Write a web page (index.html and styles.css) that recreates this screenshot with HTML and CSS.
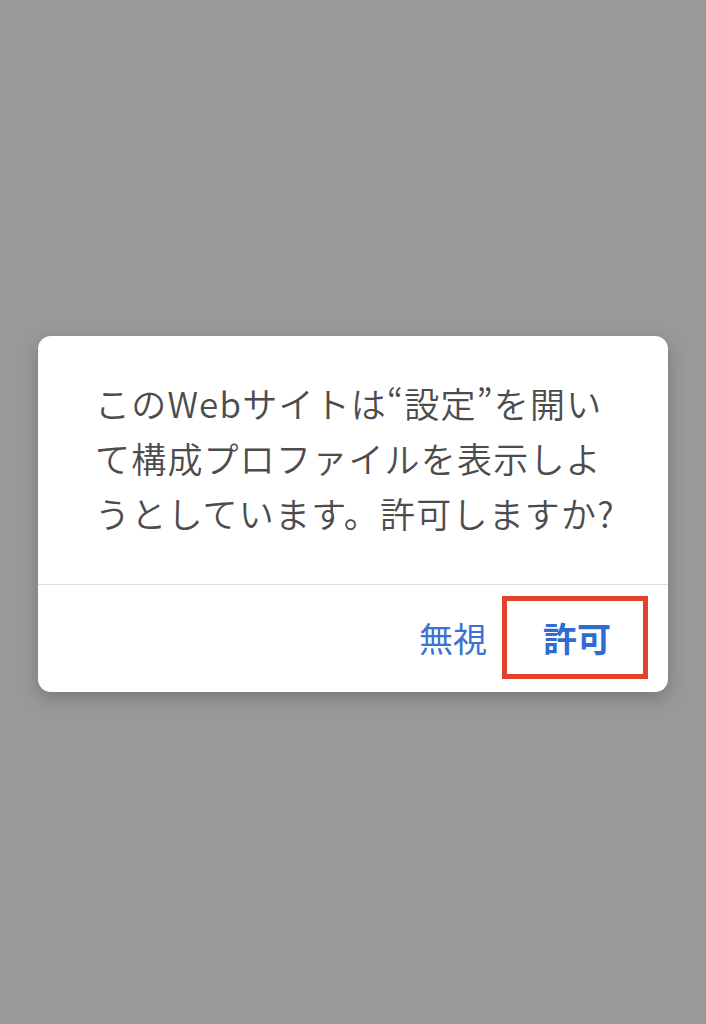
FILE: index.html
```html
<!DOCTYPE html>
<html lang="ja">
<head>
<meta charset="utf-8">
<link rel="stylesheet" href="styles.css">
</head>
<body>
<div class="screen">
  <div class="dialog">
    <div class="message">このWebサイトは“設定”を開い<br>て構成プロファイルを表示しよ<br>うとしています。許可しますか?</div>
    <div class="actions">
      <button class="btn ignore">無視</button>
      <button class="btn allow">許可</button>
    </div>
  </div>
</div>
</body>
</html>
```
FILE: styles.css
```css
html, body {
  margin: 0;
  padding: 0;
}
body {
  background: #999999;
  font-family: "Noto Sans CJK JP", "Noto Sans", sans-serif;
}
.screen {
  width: 706px;
  height: 1024px;
  display: flex;
  justify-content: center;
  padding-top: 336px;
  box-sizing: border-box;
}
.dialog {
  width: 630px;
  height: 356px;
  background: #ffffff;
  border-radius: 13px;
  box-shadow: 0 6px 18px rgba(0, 0, 0, 0.22);
  display: flex;
  flex-direction: column;
  overflow: hidden;
}
.message {
  height: 249px;
  box-sizing: border-box;
  padding: 39px 0 0 57px;
  font-size: 35px;
  font-weight: 350;
  line-height: 55px;
  color: #4c4c4c;
  letter-spacing: 1.2px;
  border-bottom: 1px solid #dcdcdc;
  white-space: nowrap;
}
.actions {
  flex: 1;
  display: flex;
  justify-content: flex-end;
  align-items: flex-start;
  padding: 11px 20px 0 0;
  gap: 15px;
}
.btn {
  font-family: "Noto Sans CJK JP", sans-serif;
  font-size: 34px;
  background: none;
  border: none;
  padding: 0;
  color: #3b72d4;
  cursor: pointer;
}
.ignore {
  height: 83px;
  line-height: 83px;
  font-weight: 400;
}
.allow {
  width: 146px;
  height: 83px;
  box-sizing: border-box;
  border: 5px solid #e2412b;
  font-weight: 700;
  color: #2f6bd3;
  line-height: 70px;
  padding-left: 4px;
}
```
